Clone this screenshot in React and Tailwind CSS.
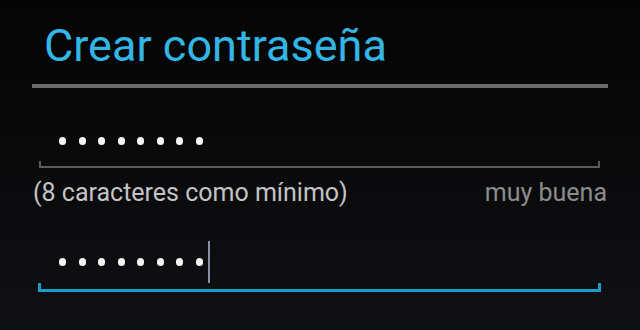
import React from "react";

function Dots() {
  return (
    <div className="flex items-center gap-[12.5px]">
      {[0, 1, 2, 3, 4, 5, 6, 7].map((i) => (
        <span key={i} className="block w-[7px] h-[8px] rounded-full bg-[#f4f4f4]" />
      ))}
    </div>
  );
}

export default function App() {
  return (
    <div className="w-[640px] h-[330px] overflow-hidden bg-gradient-to-b from-[#050505] to-[#0f1013] font-['Roboto','Liberation_Sans',sans-serif]">
      <div className="px-8 pt-[23px]">
        <h1 className="pl-3 text-[45px] leading-[45px] text-[#33b5e5] font-normal">
          Crear contraseña
        </h1>
        <div className="mt-[16px] h-[4px] bg-[#6c6c6c]" />

        {/* field 1 */}
        <div className="mt-[49px] pl-[27px] h-[8px] flex items-center">
          <Dots />
        </div>
        <div className="mt-[16px] ml-[7px] mr-[8px] h-[7px] border-l-2 border-r-2 border-b-2 border-[#5a5a5a]" />

        <div className="mt-[12px] ml-[1px] flex justify-between items-baseline text-[25px] leading-[25px]">
          <span className="text-[#c4c4c4]">(8 caracteres como mínimo)</span>
          <span className="text-[#8c8c8c] mr-[1px]">muy buena</span>
        </div>

        {/* field 2 */}
        <div className="mt-[36px] pl-[27px] h-[42px] flex items-center">
          <Dots />
          <span className="block ml-[5px] w-[2px] h-[42px] bg-[#8a8fa6]" />
        </div>
        <div className="ml-[6px] mr-[7px] h-[9px] border-l-[3px] border-r-[3px] border-b-[3px] border-[#1b9ccc]" />
      </div>
    </div>
  );
}
